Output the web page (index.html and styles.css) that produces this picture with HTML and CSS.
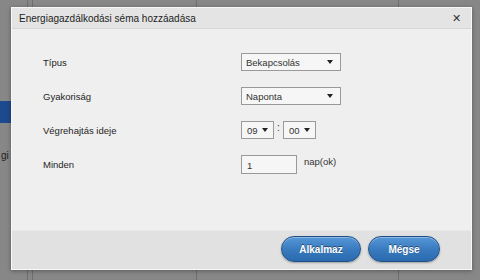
FILE: index.html
```html
<!DOCTYPE html>
<html lang="hu">
<head>
  <meta charset="UTF-8" />
  <title>Energiagazdálkodási séma hozzáadása</title>
  <link rel="stylesheet" href="styles.css">
</head>
<body>
  <div class="backdrop">
    <div class="col col-side">
      <div class="side-active"></div>
      <div class="side-text">gi</div>
    </div>
    <div class="col col-thin"></div>
    <div class="col col-a"></div>
    <div class="col col-b"></div>
    <div class="col col-c"></div>
  </div>

  <div class="dialog">
    <div class="dialog-header">
      <span class="dialog-title">Energiagazdálkodási séma hozzáadása</span>
      <span class="dialog-close">&#x2715;</span>
    </div>

    <div class="dialog-body">
      <div class="form-row">
        <label>Típus</label>
        <div class="select select-wide"><span>Bekapcsolás</span><i class="caret"></i></div>
      </div>
      <div class="form-row">
        <label>Gyakoriság</label>
        <div class="select select-wide"><span>Naponta</span><i class="caret"></i></div>
      </div>
      <div class="form-row">
        <label>Végrehajtás ideje</label>
        <div class="time">
          <div class="select select-small"><span>09</span><i class="caret"></i></div>
          <span class="colon">:</span>
          <div class="select select-small"><span>00</span><i class="caret"></i></div>
        </div>
      </div>
      <div class="form-row row-last">
        <label>Minden</label>
        <div class="every">
          <div class="text-input">1</div>
          <span class="unit">nap(ok)</span>
        </div>
      </div>
    </div>

    <div class="dialog-footer">
      <button class="btn btn-apply">Alkalmaz</button>
      <button class="btn btn-cancel">Mégse</button>
    </div>
  </div>
</body>
</html>
```

FILE: styles.css
```css
* {
  box-sizing: border-box;
  font-family: 'Liberation Sans', Arial, sans-serif;
}

body {
  margin: 0;
  width: 480px;
  height: 280px;
  overflow: hidden;
  background-color: #878787;
  position: relative;
}

.backdrop {
  display: flex;
  height: 280px;
}

.col {
  height: 100%;
  border-right: 1px solid #6e6e6e;
}

.col-side {
  width: 28px;
  padding-top: 101px;
}

.col-thin {
  width: 5px;
}

.col-a {
  width: 164px;
}

.col-b {
  width: 202px;
}

.col-c {
  flex: 1;
  border-right: none;
}

.side-active {
  height: 22px;
  background-color: #1d4a8c;
}

.side-text {
  margin-top: 27px;
  padding-left: 1px;
  font-size: 10px;
  color: #222;
}

.dialog {
  position: absolute;
  left: 11px;
  top: 7px;
  width: 461px;
  height: 263px;
  background-color: #efefef;
  border: 1px solid #f8f8f8;
  box-shadow: 0 1px 4px rgba(0,0,0,0.35);
  display: flex;
  flex-direction: column;
}

.dialog-header {
  height: 21px;
  background-color: #e4e4e4;
  border-bottom: 1px solid #d6d6d6;
  display: flex;
  align-items: center;
  justify-content: space-between;
  padding: 0 10px 0 7px;
}

.dialog-title {
  font-size: 10px;
  color: #1e1e1e;
}

.dialog-close {
  font-size: 11px;
  color: #333;
}

.dialog-body {
  flex: 1;
  padding: 24px 0 0 31px;
}

.form-row {
  display: flex;
  align-items: center;
  height: 18px;
  margin-bottom: 16px;
}

.form-row.row-last {
  margin-top: 1px;
  height: 19px;
}

.form-row label {
  width: 198px;
  font-size: 9.5px;
  color: #1e1e1e;
}

.select {
  height: 18px;
  background-color: #f6f6f6;
  border: 1px solid #9a9a9a;
  display: flex;
  align-items: center;
  justify-content: space-between;
  padding: 0 7px 0 4px;
  font-size: 9.5px;
  color: #333;
}

.select-wide {
  width: 100px;
}

.select-small {
  width: 33px;
  padding: 0 5px 0 5px;
}

.caret {
  width: 0;
  height: 0;
  border-left: 3.5px solid transparent;
  border-right: 3.5px solid transparent;
  border-top: 4px solid #222;
}

.time {
  display: flex;
  align-items: center;
}

.colon {
  width: 9px;
  text-align: center;
  font-size: 10px;
  color: #333;
  margin-top: -6px;
}

.every {
  display: flex;
  align-items: center;
}

.text-input {
  width: 56px;
  height: 19px;
  background-color: #f6f6f6;
  border: 1px solid #9a9a9a;
  font-size: 9.5px;
  color: #333;
  padding: 4px 0 0 5px;
}

.unit {
  margin-left: 7px;
  margin-top: -6px;
  font-size: 9.5px;
  color: #333;
}

.dialog-footer {
  height: 39px;
  background-color: #e1e1e1;
  border-top: 1px solid #e9e9e9;
  display: flex;
  justify-content: flex-end;
  align-items: flex-start;
  gap: 7px;
  padding: 5px 31px 0 0;
}

.btn {
  height: 26px;
  border-radius: 13px;
  border: 1px solid #1f4f86;
  background: linear-gradient(#5597d6, #3a7cc0 50%, #2a6aae);
  box-shadow: inset 0 1px 0 rgba(255,255,255,0.35), 0 1px 2px rgba(0,0,0,0.3);
  color: #fff;
  font-size: 10px;
  font-weight: bold;
  text-shadow: 0 -1px 0 rgba(0,0,0,0.45);
  cursor: pointer;
}

.btn-apply {
  width: 80px;
}

.btn-cancel {
  width: 72px;
}
```
